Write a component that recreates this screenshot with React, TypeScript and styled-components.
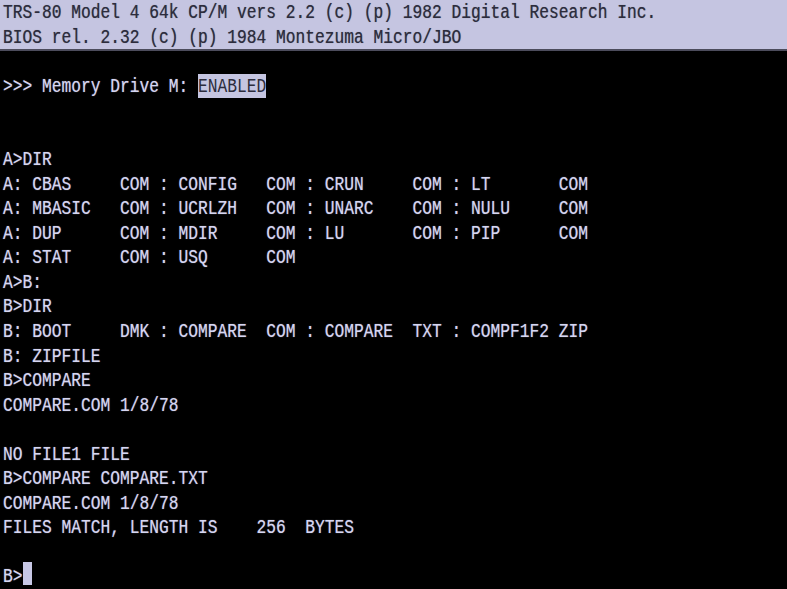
import React from "react";
import styled, { createGlobalStyle } from "styled-components";

const Global = createGlobalStyle`
  html, body { margin: 0; padding: 0; background: #000; }
  body { width: 787px; height: 589px; overflow: hidden; }
`;

const Screen = styled.div`
  width: 787px;
  height: 589px;
  background: #000;
  display: grid;
  grid-template-rows: repeat(24, 1fr);
  font-family: "Liberation Mono", "DejaVu Sans Mono", monospace;
  font-size: 16.25px;
  color: #d6d6f2;
  overflow: hidden;
`;

const Band = styled.div`
  grid-row: span 2;
  display: grid;
  grid-template-rows: 1fr 1fr;
  background: #c5c5e1;
  color: #2c2c3c;
  box-shadow: 0 2px 0 #4c4c5c;
  position: relative;
  z-index: 1;
`;

const Line = styled.div`
  padding-left: 3px;
  overflow: visible;
  white-space: pre;
  min-height: 0;
`;

const Glyphs = styled.span<{ $dark?: boolean }>`
  display: inline-block;
  line-height: 16px;
  transform: scaleY(1.3);
  transform-origin: top left;
  text-shadow: ${(p) =>
    p.$dark ? "0 0 0.6px rgba(40,40,60,0.6)" : "0 0 1px rgba(214,214,242,0.55)"};
`;

const Inverse = styled.span`
  display: inline-block;
  background: #c5c5e1;
  color: #2c2c3c;
  height: 24.5px;
  vertical-align: top;
  text-shadow: none;
`;

const InverseInner = styled.span`
  display: inline-block;
  line-height: 16px;
  transform: scaleY(1.3);
  transform-origin: top left;
`;

const Cursor = styled.span`
  display: inline-block;
  width: 9.75px;
  height: 23px;
  background: #c8c8e6;
  vertical-align: top;
  margin-top: -2px;
`;

const lines: string[] = [
  "",
  ">>> Memory Drive M: ",
  "",
  "",
  "A>DIR",
  "A: CBAS     COM : CONFIG   COM : CRUN     COM : LT       COM",
  "A: MBASIC   COM : UCRLZH   COM : UNARC    COM : NULU     COM",
  "A: DUP      COM : MDIR     COM : LU       COM : PIP      COM",
  "A: STAT     COM : USQ      COM",
  "A>B:",
  "B>DIR",
  "B: BOOT     DMK : COMPARE  COM : COMPARE  TXT : COMPF1F2 ZIP",
  "B: ZIPFILE",
  "B>COMPARE",
  "COMPARE.COM 1/8/78",
  "",
  "NO FILE1 FILE",
  "B>COMPARE COMPARE.TXT",
  "COMPARE.COM 1/8/78",
  "FILES MATCH, LENGTH IS    256  BYTES",
  "",
];

export default function App() {
  return (
    <>
      <Global />
      <Screen>
        <Band>
          <Line>
            <Glyphs $dark>
              TRS-80 Model 4 64k CP/M vers 2.2 (c) (p) 1982 Digital Research Inc.
            </Glyphs>
          </Line>
          <Line>
            <Glyphs $dark>BIOS rel. 2.32 (c) (p) 1984 Montezuma Micro/JBO</Glyphs>
          </Line>
        </Band>
        {lines.map((t, i) =>
          i === 1 ? (
            <Line key={i}>
              <Glyphs>{t}</Glyphs>
              <Inverse>
                <InverseInner>ENABLED</InverseInner>
              </Inverse>
            </Line>
          ) : (
            <Line key={i}>
              <Glyphs>{t || " "}</Glyphs>
            </Line>
          )
        )}
        <Line>
          <Glyphs>B&gt;</Glyphs>
          <Cursor />
        </Line>
      </Screen>
    </>
  );
}
